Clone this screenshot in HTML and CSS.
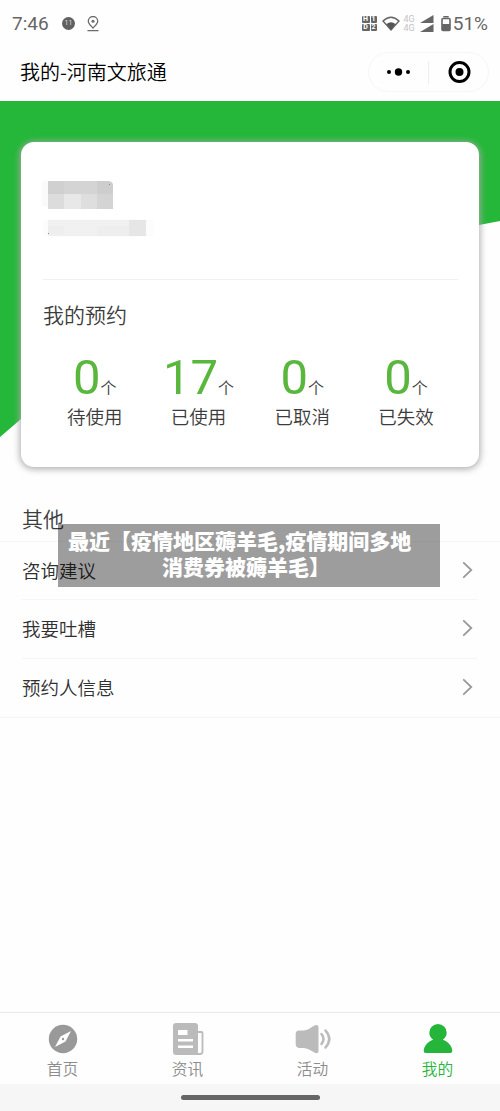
FILE: index.html
```html
<!DOCTYPE html>
<html lang="zh-CN">
<head>
<meta charset="utf-8">
<title>我的-河南文旅通</title>
<link rel="stylesheet" href="styles.css">
</head>
<body>
<div class="app">
  <header class="status">
    <span class="time">7:46</span>
    <span class="badge">11</span>
    <svg class="pin" width="12" height="16" viewBox="0 0 12 16" fill="none" stroke="#6b6b6b" stroke-width="1.3"><path d="M6 12C3.500 9.300 1.300 7.500 1.300 5.200a4.700 4.700 0 0 1 9.400 0C10.700 7.500 8.500 9.300 6 12zM.5 14.600h11"/><circle cx="6" cy="5.200" r="1.500" fill="#6b6b6b" stroke="none"/></svg>
    <div class="signals">
      <div class="sim"><span>H</span><span>1</span><span>D</span><span>2</span></div>
      <svg class="wifi" width="18" height="16" viewBox="0 0 18 16"><path d="M1 5Q9-2.500 17 5L9 14z" fill="none" stroke="#666" stroke-width="1.400"/><path d="M4.500 8Q9 4.500 13.500 8L9 14z" fill="#555"/></svg>
      <div class="net"><span>4G</span><span>4G</span></div>
      <svg class="bars" width="14" height="18" viewBox="0 0 14 18" fill="#666"><path d="M13.500 0v8H0zM13.500 9v8H0z"/></svg>
      <svg class="battery" width="10" height="16" viewBox="0 0 10 16"><path d="M3 1.500V.7h4v.8" stroke="#666" stroke-width="1.400" fill="none"/><rect x="1" y="2.500" width="8" height="12" rx="1" fill="none" stroke="#666" stroke-width="1.600"/><path d="M1 8h8v6.500H1z" fill="#666"/></svg>
      <span class="percent">51%</span>
    </div>
  </header>
  <nav class="titlebar">
    <h1>我的-河南文旅通</h1>
    <div class="capsule">
      <svg width="60" height="38" viewBox="0 0 60 38"><circle cx="20" cy="19" r="2"/><circle cx="29.500" cy="19" r="3.700"/><circle cx="39" cy="19" r="2"/></svg>
      <i></i>
      <svg width="60" height="38" viewBox="0 0 60 38"><circle cx="30.500" cy="19" r="9.500" fill="none" stroke="#000" stroke-width="3"/><circle cx="30.500" cy="19" r="4"/></svg>
    </div>
  </nav>
  <main>
    <section class="hero">
      <div class="card">
        <div class="profile">
          <svg width="112" height="66" viewBox="0 0 112 66">
            <rect x="-2" y="0" width="11" height="26" rx="8" fill="#fafafa"/><rect x="1" y="38" width="111" height="18" rx="6" fill="#fcfcfc"/>
            <path d="M6 0h16v13H6z" fill="#d0d0d0"/><path d="M22 0h33v13H22z" fill="#d4d4d4"/><path d="M55 0h12q4 1 4 4v9H55z" fill="#cdcdcd"/>
            <path d="M6 13h16v15H6z" fill="#dcdcdc"/><path d="M22 13h17v15H22z" fill="#e8e8e8"/><path d="M39 13h16v15H39z" fill="#dedede"/><path d="M55 13h16v15H55z" fill="#d4d4d4"/>
            <path d="M6 39h81v16H6z" fill="#f1f1f1"/><path d="M6 45h16v9H6zM55 45h32v10H55z" fill="#eee"/><path d="M87 39h17v16H87z" fill="#e6e6e6"/><path d="M67 3h1v1h-1zM6 52h1v1H6z" fill="#888"/>
          </svg>
        </div>
        <h2>我的预约</h2>
        <div class="stats">
          <div class="stat"><p><b>0</b>个</p><span>待使用</span></div>
          <div class="stat"><p><b>17</b>个</p><span>已使用</span></div>
          <div class="stat"><p><b>0</b>个</p><span>已取消</span></div>
          <div class="stat"><p><b>0</b>个</p><span>已失效</span></div>
        </div>
      </div>
    </section>
    <section class="other">
      <h2>其他</h2>
      <ul>
        <li>咨询建议<svg width="12" height="18" viewBox="0 0 12 18"><path d="M1.800 1.800 9.300 9 1.800 16.200"/></svg></li>
        <li>我要吐槽<svg width="12" height="18" viewBox="0 0 12 18"><path d="M1.800 1.800 9.300 9 1.800 16.200"/></svg></li>
        <li>预约人信息<svg width="12" height="18" viewBox="0 0 12 18"><path d="M1.800 1.800 9.300 9 1.800 16.200"/></svg></li>
      </ul>
      <div class="caption"><p>最近【疫情地区薅羊毛,疫情期间多地</p><p class="second">消费券被薅羊毛】</p></div>
    </section>
  </main>
  <footer class="tabs">
    <a><svg width="36" height="34" viewBox="0 0 36 34"><circle cx="18" cy="17" r="14.200" fill="#999"/><path d="M26 9 20.500 19.500 10 25 15.500 14.500z" fill="#fff"/><circle cx="18" cy="17" r="1.200" fill="#999"/></svg>首页</a>
    <a><svg width="36" height="34" viewBox="0 0 36 34"><rect x="3" y="1" width="25" height="32" rx="3" fill="#bbb"/><path d="M27 10h4.500q1 0 1 1v18.500q0 2.500-2.500 2.500h-5" fill="none" stroke="#bbb" stroke-width="1.800"/><path d="M28.500 11v19" stroke="#fff" stroke-width="1"/><path d="M8 8h9.500v5H8zM8 17h15v2.500H8zM8 23.500h15V26H8z" fill="#fff"/></svg>资讯</a>
    <a><svg width="36" height="34" viewBox="0 0 36 34"><path d="M4 8.500h5Q13 8 18.500 4q4.500-2.500 5 1v24q-.5 4-5 1Q13 26.500 9 26H4Q.7 25.500 .7 22v-10Q.7 8.500 4 8.500z" fill="#bbb"/><path d="M26.500 12q4 5 0 10M30.500 8.500q7.500 8.500 0 17" fill="none" stroke="#bbb" stroke-width="2.500" stroke-linecap="round"/></svg>活动</a>
    <a class="active"><svg width="36" height="34" viewBox="0 0 36 34" fill="#24b53a"><path d="M18 2a8.700 8.700 0 0 1 8.700 8.700c0 3.300-1.700 5.300-3.900 7C28 19.500 32.300 24 32.300 29q0 2-2 2H5.700q-2 0-2-2c0-5 4.300-9.500 9.500-11.300-2.200-1.700-3.900-3.700-3.900-7A8.700 8.700 0 0 1 18 2z"/></svg>我的</a>
  </footer>
  <div class="homebar"><i></i></div>
</div>
</body>
</html>
```

FILE: styles.css
```css
* { box-sizing: border-box; margin: 0; padding: 0; }
body { font-family: Roboto, "Noto Sans CJK SC", sans-serif; font-weight: 350; color: #3c3c3c; background: #fefefe; }
.app { width: 500px; height: 1111px; display: flex; flex-direction: column; overflow: hidden; }
svg { display: block; flex: none; }
h1, h2 { font-weight: 350; }

.status { height: 44px; padding: 3px 12px 0; display: flex; align-items: center; color: #666; font-weight: 400; }
.time { width: 50px; font-size: 19px; }
.badge { width: 13px; height: 13px; border-radius: 50%; background: #606060; color: #ddd; font-size: 7px; line-height: 13px; text-align: center; }
.pin { margin-left: 12px; }
.signals { margin-left: auto; display: flex; align-items: center; }
.sim { display: grid; grid-template-columns: 8px 6px; gap: 1px; margin-right: 5px; }
.sim span { height: 7px; background: #666; color: #fff; font-size: 7px; font-weight: 700; line-height: 7px; text-align: center; border-radius: 1px; }
.net { display: flex; flex-direction: column; font-size: 9px; line-height: 9px; color: #c4c4c4; margin: 0 5px 0 4px; }
.battery { margin: 0 2px 0 7px; }
.percent { font-size: 19px; }

.titlebar { height: 57px; padding: 0 11px 1px 20px; display: flex; align-items: center; justify-content: space-between; }
.titlebar h1 { padding-bottom: 2px; font-family: "Noto Sans CJK SC", sans-serif; font-size: 20px; color: #000; }
.capsule { height: 40px; display: flex; align-items: center; border: 1px solid #f6f6f6; border-radius: 20px; }
.capsule svg { margin: 0 -.5px; }
.capsule i { width: 1px; height: 23px; background: #eee; }

.hero { height: 391px; padding: 41px 21px 0; position: relative; isolation: isolate; }
.hero::before { content: ""; position: absolute; z-index: -1; inset: 0; background: #24b739; clip-path: polygon(0 0, 100% 0, 100% 120px, 479px 124px, 21px 318px, 0 336px); }
.card { height: 325px; padding: 0 21px 0 22px; background: #fff; border-radius: 13px; box-shadow: 0 1px 7px 1px #aaa; }
.profile { height: 138px; padding-top: 39px; border-bottom: 1px solid #f0f0f0; }
.profile svg { margin-left: -1px; }
.card h2 { margin-top: 20px; font-size: 21px; line-height: 32px; }
.stats { display: grid; grid-template-columns: repeat(4, 103.7px); margin-top: 17px; }
.stat { text-align: center; font-size: 18.5px; }
.stat p { font-size: 16px; line-height: 58px; height: 58px; white-space: nowrap; }
.stat b { font-size: 49px; font-weight: 400; color: #5ab73e; }
.stat span { display: block; line-height: 28px; margin-top: -3px; }

.other { position: relative; }
.other h2 { height: 49px; padding: 11px 22px 0; font-size: 21px; line-height: 34px; }
.other ul { list-style: none; border-top: 1px solid #f6f6f6; border-bottom: 1px solid #f4f4f4; color: #303030; }
.other li { height: 58.300px; margin: 0 22px; padding: 0 4px 1px 0; display: flex; align-items: center; justify-content: space-between; font-size: 18.500px; border-bottom: 1px solid #f6f6f6; }
.other li:last-child { border: 0; }
.other li svg { fill: none; stroke: #999; stroke-width: 1.800; stroke-linecap: round; }
.caption { position: absolute; left: 58px; top: 32px; width: 382px; height: 63px; padding: 3px 10px; background: rgba(0,0,0,.38); color: #fff; font: 900 21px/26px "Noto Sans CJK SC", sans-serif; white-space: nowrap; }
.caption .second { padding-left: 94px; }

.tabs { height: 72px; margin-top: auto; padding-top: 9px; display: grid; grid-template-columns: repeat(4, 1fr); border-top: 1px solid #e9e9e9; }
.tabs a { display: flex; flex-direction: column; align-items: center; font-size: 15.700px; line-height: 27px; color: #8c8c8c; }
.tabs .active { color: #24b53a; }
.homebar { height: 27px; padding-top: 11px; background: #f6f6f6; }
.homebar i { display: block; width: 139px; height: 5px; margin-left: 181px; border-radius: 3px; background: #666; }
```
